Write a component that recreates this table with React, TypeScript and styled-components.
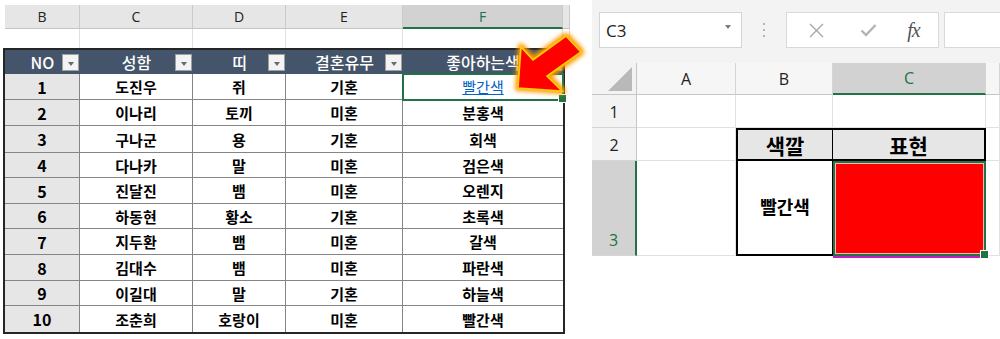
import React from "react";
import styled, { createGlobalStyle, css } from "styled-components";

const Global = createGlobalStyle`
  html, body { margin: 0; padding: 0; background: #ffffff; }
  body { font-family: "Noto Sans CJK KR", "Noto Sans", sans-serif; }
  * { box-sizing: border-box; }
`;

const GREEN = "#217346";
const UI_FONT = `"Open Sans", "Noto Sans", sans-serif`;
const KR_FONT = `"Noto Sans CJK KR", "Noto Sans", sans-serif`;

const Page = styled.div`
  position: relative;
  width: 1000px;
  height: 339px;
  display: flex;
  overflow: hidden;
  background: #fff;
`;

/* ---------- left sheet ---------- */
const LeftPanel = styled.div`
  width: 570px;
  padding-top: 5px;
  display: flex;
  flex-direction: column;
`;

const COLS = "75px 113px 93px 117px 160px";

const ColBar = styled.div`
  display: grid;
  grid-template-columns: ${COLS} 7px;
  margin-left: 5px;
  height: 24px;
`;

const ColHead = styled.div<{ $active?: boolean }>`
  display: flex;
  align-items: center;
  justify-content: center;
  font-family: ${UI_FONT};
  font-size: 14px;
  color: ${(p) => (p.$active ? GREEN : "#222")};
  background: ${(p) => (p.$active ? "#d2d2d2" : "#e6e6e6")};
  border-right: 1px solid #cacaca;
  border-bottom: ${(p) => (p.$active ? `2px solid ${GREEN}` : "1px solid #c4c4c4")};
`;

const BlankRow = styled.div`
  display: grid;
  grid-template-columns: ${COLS} 7px;
  margin-left: 5px;
  height: 19px;
`;

const BlankCell = styled.div`
  border-right: 1px solid #e0e0e0;
`;

const Table = styled.div`
  margin-left: 3px;
  width: 562px;
  display: grid;
  grid-template-columns: ${COLS};
  grid-template-rows: 24px 26px 26px 27px 25px 26px 25px 26px 26px 25px 26px;
  border: 2px solid #262626;
`;

const HeadCell = styled.div`
  position: relative;
  display: flex;
  align-items: center;
  justify-content: center;
  background: #44546a;
  color: #ffffff;
  font-family: ${KR_FONT};
  font-size: 16px;
  font-weight: 500;
`;

const FilterBtn = styled.span`
  position: absolute;
  right: 1px;
  top: 4px;
  width: 17px;
  height: 17px;
  background: #f3f3f3;
  border: 1px solid #a0a0a0;
  display: flex;
  align-items: center;
  justify-content: center;
  &::after {
    content: "";
    margin-top: 2px;
    border-left: 3.5px solid transparent;
    border-right: 3.5px solid transparent;
    border-top: 4px solid #6a6a6a;
  }
`;

const DataCell = styled.div<{ $num?: boolean; $last?: boolean; $lastCol?: boolean; $selected?: boolean }>`
  position: relative;
  display: flex;
  align-items: center;
  justify-content: center;
  background: ${(p) => (p.$num ? "#e7e6e6" : "#ffffff")};
  color: #000;
  font-family: ${KR_FONT};
  font-weight: 700;
  font-size: ${(p) => (p.$num ? "16px" : "15px")};
  border-right: ${(p) => (p.$lastCol ? "none" : "1px solid #858585")};
  border-bottom: ${(p) => (p.$last ? "none" : "1px solid #858585")};
  ${(p) =>
    p.$selected &&
    css`
      outline: 2px solid ${GREEN};
      outline-offset: -1px;
      z-index: 1;
      &::after {
        content: "";
        position: absolute;
        right: -4px;
        bottom: -4px;
        width: 7px;
        height: 7px;
        background: ${GREEN};
        border: 1px solid #fff;
      }
    `}
`;

const LinkText = styled.span`
  color: #0563c1;
  text-decoration: underline;
  font-weight: 400;
  font-size: 15px;
`;

const ArrowSvg = styled.svg`
  position: absolute;
  left: 500px;
  top: 20px;
  width: 100px;
  height: 90px;
  overflow: visible;
  pointer-events: none;
  z-index: 5;
`;

/* ---------- right sheet ---------- */
const RightPanel = styled.div`
  width: 408px;
  margin-left: 22px;
  display: flex;
  flex-direction: column;
`;

const FormulaBar = styled.div`
  height: 63px;
  background: #f3f3f3;
  display: flex;
  align-items: flex-start;
  padding: 12px 0 0 7px;
`;

const NameBox = styled.div`
  width: 143px;
  height: 36px;
  background: #fff;
  border: 1px solid #d4d4d4;
  display: flex;
  align-items: center;
  justify-content: space-between;
  padding: 0 10px 0 6px;
  font-family: ${UI_FONT};
  font-size: 17px;
  color: #222;
`;

const Caret = styled.span`
  border-left: 3.5px solid transparent;
  border-right: 3.5px solid transparent;
  border-top: 4px solid #7a7a7a;
  margin-top: -6px;
`;

const Dots = styled.div`
  width: 44px;
  height: 36px;
  display: flex;
  align-items: center;
  justify-content: center;
`;

const FxBox = styled.div`
  width: 153px;
  height: 36px;
  background: #fff;
  border: 1px solid #d9d9d9;
  display: grid;
  grid-template-columns: 58px 46px 49px;
  align-items: center;
  justify-items: center;
`;

const FxText = styled.span`
  font-family: "Liberation Serif", "DejaVu Serif", serif;
  font-style: italic;
  font-size: 20px;
  color: #555;
  letter-spacing: -1px;
  margin-left: -4px;
`;

const FormulaInput = styled.div`
  margin-left: 5px;
  flex: 1;
  height: 36px;
  background: #fff;
  border: 1px solid #d9d9d9;
  border-right: none;
`;

const Grid = styled.div`
  display: grid;
  grid-template-columns: 45px 99px 97px 153px 14px;
  grid-template-rows: 32px 33px 33px 95px;
`;

const Corner = styled.div`
  background: #f3f3f3;
  border-right: 1px solid #c6c6c6;
  border-bottom: 1px solid #c6c6c6;
  display: flex;
  align-items: flex-end;
  justify-content: flex-end;
  padding: 0 4px 3px 0;
`;

const ColHeadR = styled.div<{ $active?: boolean }>`
  display: flex;
  align-items: center;
  justify-content: center;
  font-family: ${UI_FONT};
  font-size: 16px;
  color: ${(p) => (p.$active ? GREEN : "#222")};
  background: ${(p) => (p.$active ? "#d2d2d2" : "#f6f6f6")};
  border-right: 1px solid #d5d5d5;
  border-bottom: ${(p) => (p.$active ? `2px solid ${GREEN}` : "1px solid #c6c6c6")};
`;

const RowHeadR = styled.div<{ $active?: boolean }>`
  display: flex;
  align-items: flex-end;
  justify-content: center;
  padding-bottom: 4px;
  font-family: ${UI_FONT};
  font-size: 16px;
  color: ${(p) => (p.$active ? GREEN : "#222")};
  background: ${(p) => (p.$active ? "#d2d2d2" : "#f3f3f3")};
  border-right: ${(p) => (p.$active ? `2px solid ${GREEN}` : "1px solid #c6c6c6")};
  border-bottom: 1px solid #d5d5d5;
`;

const Cell = styled.div`
  background: #fff;
  border-right: 1px solid #e1e1e1;
  border-bottom: 1px solid #e1e1e1;
`;

const TitleCell = styled.div<{ $side: "left" | "right" }>`
  display: flex;
  align-items: center;
  justify-content: center;
  background: #e7e6e6;
  font-family: ${KR_FONT};
  font-weight: 700;
  font-size: 21px;
  color: #000;
  border-top: 2px solid #000;
  border-bottom: 2px solid #000;
  border-left: ${(p) => (p.$side === "left" ? "2px solid #000" : "none")};
  border-right: ${(p) => (p.$side === "left" ? "1px solid #000" : "2px solid #000")};
`;

const LabelCell = styled.div`
  display: flex;
  align-items: center;
  justify-content: center;
  padding-bottom: 4px;
  background: #fff;
  font-family: ${KR_FONT};
  font-weight: 700;
  font-size: 18px;
  color: #000;
  border-left: 2px solid #000;
  border-right: 1px solid #000;
  border-bottom: 2px solid #000;
`;

const ColorCell = styled.div`
  position: relative;
  background: #ff0000;
  border: 2px solid ${GREEN};
  box-shadow: inset 0 0 0 1px #f4b8b8;
  &::before {
    content: "";
    position: absolute;
    left: -2px;
    right: -2px;
    bottom: -4px;
    height: 2px;
    background: #c21fc2;
  }
  &::after {
    content: "";
    position: absolute;
    right: -5px;
    bottom: -5px;
    width: 7px;
    height: 7px;
    background: ${GREEN};
    border: 1px solid #fff;
  }
`;

const headers = ["NO", "성함", "띠", "결혼유무", "좋아하는색"];
const rows: [number, string, string, string, string][] = [
  [1, "도진우", "쥐", "기혼", "빨간색"],
  [2, "이나리", "토끼", "미혼", "분홍색"],
  [3, "구나군", "용", "기혼", "회색"],
  [4, "다나카", "말", "미혼", "검은색"],
  [5, "진달진", "뱀", "미혼", "오렌지"],
  [6, "하동현", "황소", "기혼", "초록색"],
  [7, "지두환", "뱀", "미혼", "갈색"],
  [8, "김대수", "뱀", "미혼", "파란색"],
  [9, "이길대", "말", "기혼", "하늘색"],
  [10, "조춘희", "호랑이", "미혼", "빨간색"],
];

export default function App() {
  return (
    <>
      <Global />
      <Page>
        <LeftPanel>
          <ColBar>
            {["B", "C", "D", "E", "F", ""].map((c, i) => (
              <ColHead key={i} $active={c === "F"}>
                {c}
              </ColHead>
            ))}
          </ColBar>
          <BlankRow>
            {[0, 1, 2, 3, 4, 5].map((i) => (
              <BlankCell key={i} />
            ))}
          </BlankRow>
          <Table>
            {headers.map((h) => (
              <HeadCell key={h}>
                {h}
                <FilterBtn />
              </HeadCell>
            ))}
            {rows.map((r, ri) =>
              r.map((v, ci) => (
                <DataCell
                  key={`${ri}-${ci}`}
                  $num={ci === 0}
                  $last={ri === rows.length - 1}
                  $lastCol={ci === 4}
                  $selected={ri === 0 && ci === 4}
                >
                  {ri === 0 && ci === 4 ? <LinkText>{v}</LinkText> : v}
                </DataCell>
              ))
            )}
          </Table>
        </LeftPanel>

        <RightPanel>
          <FormulaBar>
            <NameBox>
              C3
              <Caret />
            </NameBox>
            <Dots>
              <svg width="4" height="16" viewBox="0 0 4 16">
                <rect x="1" y="1" width="2" height="2" fill="#b5b5b5" />
                <rect x="1" y="7" width="2" height="2" fill="#b5b5b5" />
                <rect x="1" y="13" width="2" height="2" fill="#b5b5b5" />
              </svg>
            </Dots>
            <FxBox>
              <svg width="15" height="15" viewBox="0 0 15 15">
                <path d="M1 1 L14 14 M14 1 L1 14" stroke="#a8a8a8" strokeWidth="1.4" />
              </svg>
              <svg width="17" height="14" viewBox="0 0 17 14">
                <path d="M1.5 7.5 L6 12 L15.5 2" stroke="#b4b4b4" strokeWidth="2.4" fill="none" />
              </svg>
              <FxText>fx</FxText>
            </FxBox>
            <FormulaInput />
          </FormulaBar>
          <Grid>
            <Corner>
              <svg width="24" height="24" viewBox="0 0 24 24">
                <polygon points="24,0 24,24 0,24" fill="#b9b9b9" />
              </svg>
            </Corner>
            <ColHeadR>A</ColHeadR>
            <ColHeadR>B</ColHeadR>
            <ColHeadR $active>C</ColHeadR>
            <ColHeadR />

            <RowHeadR>1</RowHeadR>
            <Cell />
            <Cell />
            <Cell />
            <Cell />

            <RowHeadR>2</RowHeadR>
            <Cell />
            <TitleCell $side="left">색깔</TitleCell>
            <TitleCell $side="right">표현</TitleCell>
            <Cell />

            <RowHeadR $active>3</RowHeadR>
            <Cell />
            <LabelCell>빨간색</LabelCell>
            <ColorCell />
            <Cell />
          </Grid>
        </RightPanel>

        <ArrowSvg viewBox="0 0 100 90">
          <defs>
            <filter id="glow" x="-40%" y="-40%" width="180%" height="180%">
              <feMorphology in="SourceAlpha" operator="dilate" radius="1.5" result="d" />
              <feGaussianBlur in="d" stdDeviation="2" result="b" />
              <feFlood floodColor="#ff9a00" result="c" />
              <feComposite in="c" in2="b" operator="in" result="g" />
              <feMerge>
                <feMergeNode in="g" />
                <feMergeNode in="SourceGraphic" />
              </feMerge>
            </filter>
          </defs>
          <polygon
            points="18,68 21,27 33,40 66,16 81,32 47,56 62,71"
            fill="#ff0000"
            stroke="#ffd000"
            strokeWidth="1.6"
            strokeLinejoin="miter"
            filter="url(#glow)"
          />
        </ArrowSvg>
      </Page>
    </>
  );
}
